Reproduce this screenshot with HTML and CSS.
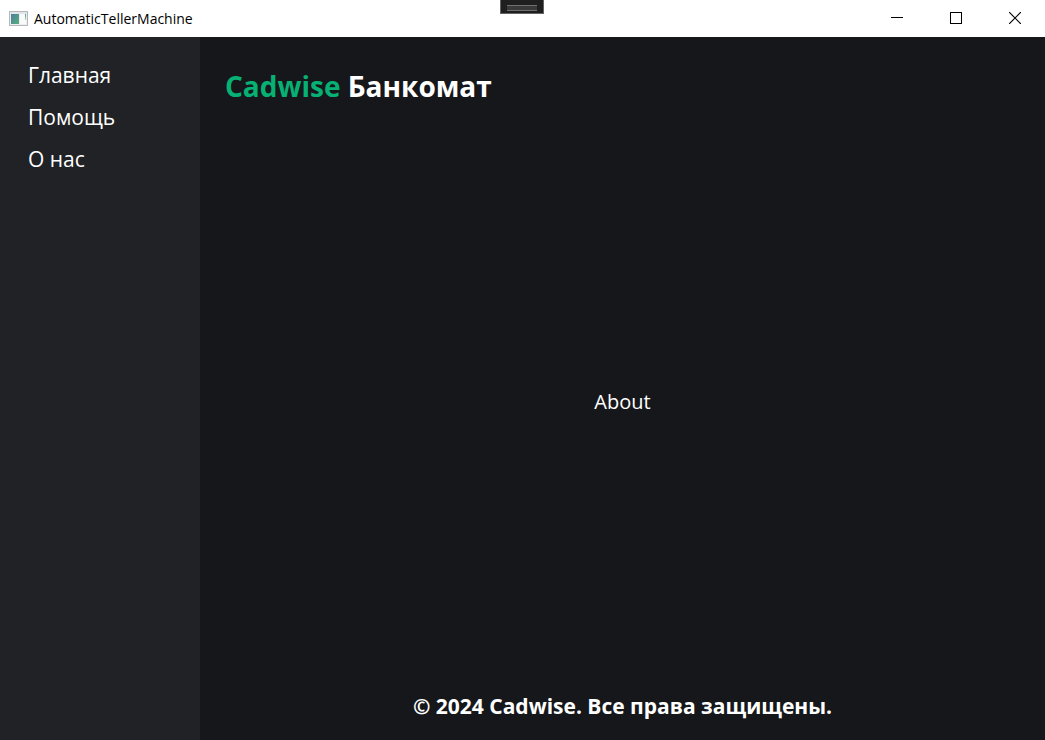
FILE: index.html
```html
<!DOCTYPE html>
<html lang="ru">
<head>
<meta charset="utf-8">
<title>AutomaticTellerMachine</title>
<link rel="stylesheet" href="styles.css">
</head>
<body>
<div class="window">
  <header class="titlebar">
    <svg class="app-icon" width="20" height="16" viewBox="0 0 20 16" aria-hidden="true">
      <defs>
        <linearGradient id="pane" x1="0" y1="0" x2="1" y2="1">
          <stop offset="0" stop-color="#4a7fa0"/>
          <stop offset="1" stop-color="#58ad7c"/>
        </linearGradient>
        <linearGradient id="strip" x1="0" y1="0" x2="0" y2="1">
          <stop offset="0" stop-color="#5a9aa0"/>
          <stop offset="1" stop-color="#b4dcae"/>
        </linearGradient>
      </defs>
      <rect x="0.5" y="0.5" width="18" height="14" fill="#eceef0" stroke="#b4b8be"/>
      <rect x="1" y="1" width="17" height="2" fill="#e2e5e8"/>
      <rect x="2" y="3" width="8" height="10" fill="url(#pane)"/>
      <rect x="11" y="3" width="6" height="10" fill="#fafafa"/>
      <rect x="16" y="3" width="1" height="6" fill="url(#strip)"/>
    </svg>
    <span class="app-name">AutomaticTellerMachine</span>
    <div class="window-buttons">
      <button class="window-button" type="button" aria-label="Свернуть">
        <svg width="12" height="12" viewBox="0 0 12 12"><path d="M0 5.5H12" stroke="#000"/></svg>
      </button>
      <button class="window-button" type="button" aria-label="Развернуть">
        <svg width="12" height="12" viewBox="0 0 12 12"><rect x="0.5" y="0.5" width="11" height="11" fill="none" stroke="#000"/></svg>
      </button>
      <button class="window-button" type="button" aria-label="Закрыть">
        <svg width="12" height="12" viewBox="0 0 12 12"><path d="M0 0L12 12M12 0L0 12" stroke="#000" stroke-width="1.2"/></svg>
      </button>
    </div>
    <div class="debug-handle"></div>
  </header>
  <div class="body">
    <nav class="sidebar">
      <a class="nav-link" href="#home">Главная</a>
      <a class="nav-link" href="#help">Помощь</a>
      <a class="nav-link" href="#about">О нас</a>
    </nav>
    <main class="content">
      <h1 class="heading"><span class="brand">Cadwise</span> Банкомат</h1>
      <p class="page">About</p>
      <footer class="footer">© 2024 Cadwise. Все права защищены.</footer>
    </main>
  </div>
</div>
</body>
</html>
```
FILE: styles.css
```css
* {
  box-sizing: border-box;
}

body {
  margin: 0;
  font-family: "Open Sans", "Noto Sans", sans-serif;
  color: #fff;
  background: #16171b;
}

.window {
  display: flex;
  flex-direction: column;
  min-height: 100vh;
}

.titlebar {
  position: relative;
  display: flex;
  align-items: center;
  height: 37px;
  padding-left: 9px;
  background: #fff;
  color: #000;
}

.app-icon {
  margin-right: 5px;
}

.app-name {
  font-size: 14px;
}

.window-buttons {
  display: flex;
  align-self: stretch;
  margin-left: auto;
  padding: 0 1px 1px 0;
}

.window-button {
  display: flex;
  align-items: center;
  justify-content: center;
  width: 59px;
  padding: 0;
  border: 0;
  background: none;
}

.debug-handle {
  position: absolute;
  top: 0;
  left: 50%;
  width: 44px;
  height: 14px;
  margin-left: -23px;
  border: 1px solid #646464;
  border-top: 0;
  background: #1f1f1f;
}

.debug-handle::before {
  content: "";
  display: block;
  height: 4px;
  margin: 5px 6px 0;
  border: solid #707070;
  border-width: 1px 0;
  background: #3a3a3a;
}

.body {
  display: flex;
  flex: 1;
}

.sidebar {
  display: flex;
  flex-direction: column;
  flex: 0 0 200px;
  gap: 12px;
  padding: 23px 28px;
  background: #202225;
}

.nav-link {
  font-size: 21px;
  line-height: 30px;
  color: inherit;
  text-decoration: none;
}

.content {
  display: flex;
  flex-direction: column;
  flex: 1;
  padding: 29px 25px 19px;
}

.heading {
  margin: 0 0 5px;
  font-size: 28px;
  line-height: 40px;
  font-weight: 700;
}

.brand {
  color: #07b073;
}

.page {
  display: flex;
  flex: 1;
  align-items: center;
  justify-content: center;
  margin: 0;
  font-size: 20px;
}

.footer {
  font-size: 21px;
  line-height: 30px;
  font-weight: 700;
  text-align: center;
}
```
